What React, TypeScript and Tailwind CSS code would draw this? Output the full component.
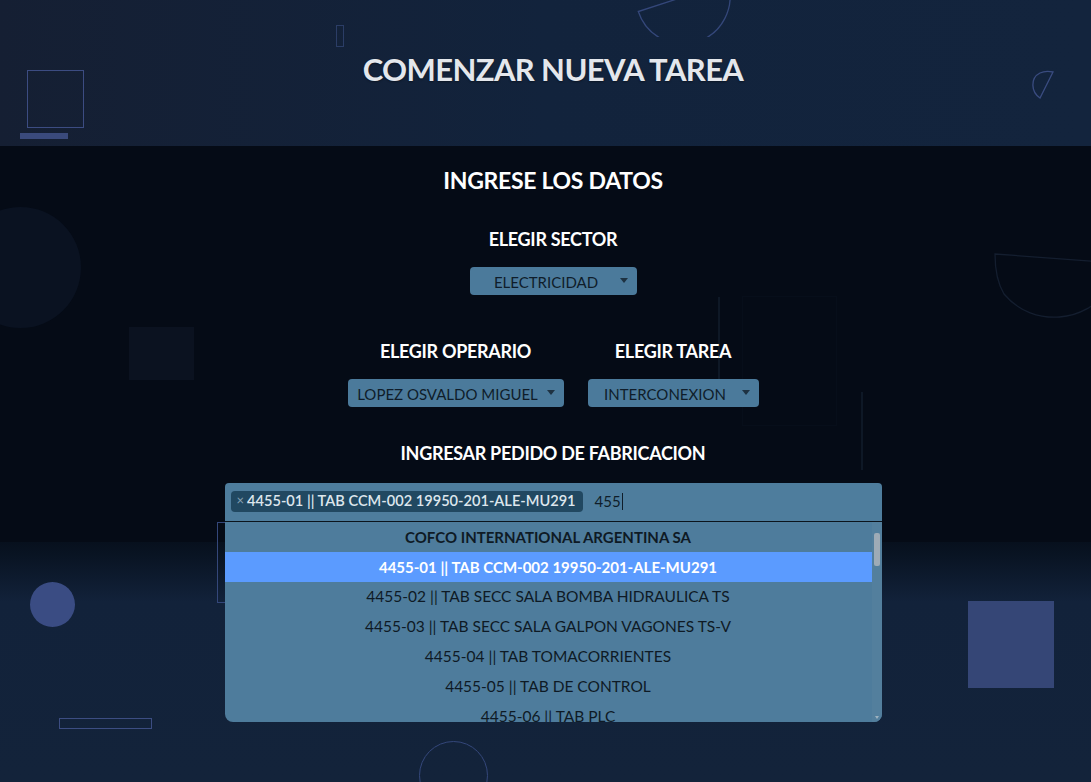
import React from 'react';

const pedidos = [
  '4455-02 || TAB SECC SALA BOMBA HIDRAULICA TS',
  '4455-03 || TAB SECC SALA GALPON VAGONES TS-V',
  '4455-04 || TAB TOMACORRIENTES',
  '4455-05 || TAB DE CONTROL',
  '4455-06 || TAB PLC',
];

function Caret() {
  return (
    <span className="absolute right-[9px] top-[11px] h-0 w-0 border-x-[4px] border-t-[5px] border-x-transparent border-t-[#1e3242]" />
  );
}

function SelectBox({ value, className }: { value: string; className: string }) {
  return (
    <div className={`relative flex h-[28px] items-center justify-center rounded-[4px] bg-[#4b7a9b] pl-2 pr-6 pt-[3px] text-[15px] text-[#0f1d2a] ${className}`}>
      <span className="whitespace-nowrap">{value}</span>
      <Caret />
    </div>
  );
}

function Label({ children }: { children: React.ReactNode }) {
  return <h3 className="text-[18px] font-bold leading-6 tracking-[-0.3px] text-white">{children}</h3>;
}

export default function App() {
  return (
    <div className="relative flex min-h-[782px] flex-col overflow-hidden bg-[#13223a] font-[Lato,'Noto_Sans',sans-serif]">
      {/* header */}
      <header className="relative flex h-[146px] items-center justify-center bg-gradient-to-r from-[#151f33] via-[#12233c] to-[#13243d] pb-[8px] pl-[15px] shadow-[0_3px_3px_rgba(0,0,0,0.5)]">
        <div className="absolute left-[27px] top-[70px] h-[58px] w-[57px] border border-[#3c4c82]" />
        <div className="absolute left-[20px] top-[133px] h-[6px] w-[48px] bg-[#3a4a7c]" />
        <div className="absolute left-[336px] top-[25px] h-[22px] w-[8px] border border-[#2b3d66]" />
        <svg className="absolute left-[628px] top-[-43px]" width="110" height="80" viewBox="0 0 110 80">
          <g transform="rotate(-18 55 40)">
            <path d="M8 40 A47 47 0 0 0 102 40 Z" fill="none" stroke="#34477a" strokeWidth="1.3" />
          </g>
        </svg>
        <svg className="absolute left-[1028px] top-[68px]" width="30" height="34" viewBox="0 0 30 34">
          <path d="M25 4 L12 30 C3 24 2 10 12 5 C16 3 21 3 25 4 Z" fill="none" stroke="#3a4c80" strokeWidth="1.3" />
        </svg>
        <h1 className="relative text-[31px] font-bold tracking-[-0.6px] text-[#e4e7ec] [text-shadow:0_1px_2px_rgba(0,0,0,0.4)]">
          COMENZAR NUEVA TAREA
        </h1>
      </header>

      {/* datos */}
      <section className="relative z-10 flex flex-col items-center bg-[#050b16] pb-[20px] pl-[15px] pt-[19px]">
        <div className="absolute left-[-40px] top-[61px] h-[121px] w-[121px] rounded-full bg-[#0a1221]" />
        <div className="absolute left-[129px] top-[181px] h-[53px] w-[65px] bg-[#0b1220]" />
        <div className="absolute left-[718px] top-[151px] h-[94px] w-[2px] bg-[#0e1826]" />
        <div className="absolute left-[861px] top-[246px] h-[78px] w-[2px] bg-[#0e1826]" />
        <div className="absolute left-[742px] top-[150px] h-[130px] w-[95px] border border-[#070e1a]" />
        <svg className="absolute left-[994px] top-[106px]" width="110" height="72" viewBox="0 0 110 72">
          <path d="M1 2 L110 10 L110 40 C95 68 40 78 10 42 C4 32 1 18 1 2 Z" fill="none" stroke="#141e2f" strokeWidth="1.3" />
        </svg>
        <div className="absolute left-[217px] top-[376px] h-[81px] w-[60px] border border-[#34477a]" />

        <h2 className="relative text-[23px] font-bold leading-[30px] tracking-[-0.3px] text-white">INGRESE LOS DATOS</h2>

        <div className="relative mt-[32px] flex flex-col items-center">
          <Label>ELEGIR SECTOR</Label>
          <SelectBox value="ELECTRICIDAD" className="mt-[16px] w-[167px] pl-[10px]" />
        </div>

        <div className="relative mt-[44px] flex gap-[24px]">
          <div className="flex flex-col items-center">
            <Label>ELEGIR OPERARIO</Label>
            <SelectBox value="LOPEZ OSVALDO MIGUEL" className="mt-[16px] h-[27px] w-[216px]" />
          </div>
          <div className="flex flex-col items-center">
            <Label>ELEGIR TAREA</Label>
            <SelectBox value="INTERCONEXION" className="mt-[16px] h-[27px] w-[171px]" />
          </div>
        </div>

        <div className="relative mt-[34px] flex flex-col items-center">
          <Label>INGRESAR PEDIDO DE FABRICACION</Label>

          <div className="relative mt-[18px] w-[657px]">
            <div className="flex h-[39px] items-center gap-[12px] rounded-t-[4px] border-b border-[#0b141c] bg-[#4e7d9d] px-[6px] pb-[2px]">
              <span className="flex h-[21px] items-center gap-[3px] rounded-[4px] bg-[#214861] pl-[6px] pr-[7px] text-[14.6px] font-semibold text-[#dde6ed]">
                <span className="text-[13px] font-normal text-[#8aa3b4]">×</span>
                4455-01 || TAB CCM-002 19950-201-ALE-MU291
              </span>
              <span className="flex items-center text-[15px] text-[#0f1d2a]">
                455<span className="ml-[1px] h-[17px] w-px bg-[#0f1d2a]" />
              </span>
            </div>

            <div className="absolute left-0 top-full z-20 flex h-[200px] w-full overflow-hidden rounded-b-[8px] bg-[#4e7c9c] text-[15.5px] text-[#0e1a25]">
              <ul className="flex-1">
                <li className="flex h-[30px] items-center justify-center text-[15px] font-bold">COFCO INTERNATIONAL ARGENTINA SA</li>
                <li className="flex h-[30px] items-center justify-center bg-[#5b9bff] text-[15px] font-bold text-white">
                  4455-01 || TAB CCM-002 19950-201-ALE-MU291
                </li>
                {pedidos.map(p => (
                  <li key={p} className="flex h-[30px] items-center justify-center">{p}</li>
                ))}
              </ul>
              <div className="relative w-[10px] bg-[#537f9d]">
                <div className="absolute left-[2px] top-[11px] h-[33px] w-[6px] rounded-[2px] bg-[#9eabb6]" />
                <span className="absolute bottom-[3px] left-[3px] h-0 w-0 border-x-[2px] border-t-[3px] border-x-transparent border-t-[#9eb2c0]" />
              </div>
            </div>
          </div>
        </div>
      </section>

      {/* bottom */}
      <section className="relative flex-1 bg-gradient-to-b from-[#07101d] via-[#12223a] via-[25%] to-[#13233a]">
        <div className="absolute left-[30px] top-[40px] h-[45px] w-[45px] rounded-full bg-[#3a4c83]" />
        <div className="absolute left-[59px] top-[176px] h-[11px] w-[93px] border border-[#3c4d82]" />
        <div className="absolute left-[968px] top-[59px] h-[87px] w-[86px] bg-[#354676]" />
        <div className="absolute left-[419px] top-[199px] h-[69px] w-[69px] rounded-full border border-[#34477a]" />
      </section>
    </div>
  );
}
